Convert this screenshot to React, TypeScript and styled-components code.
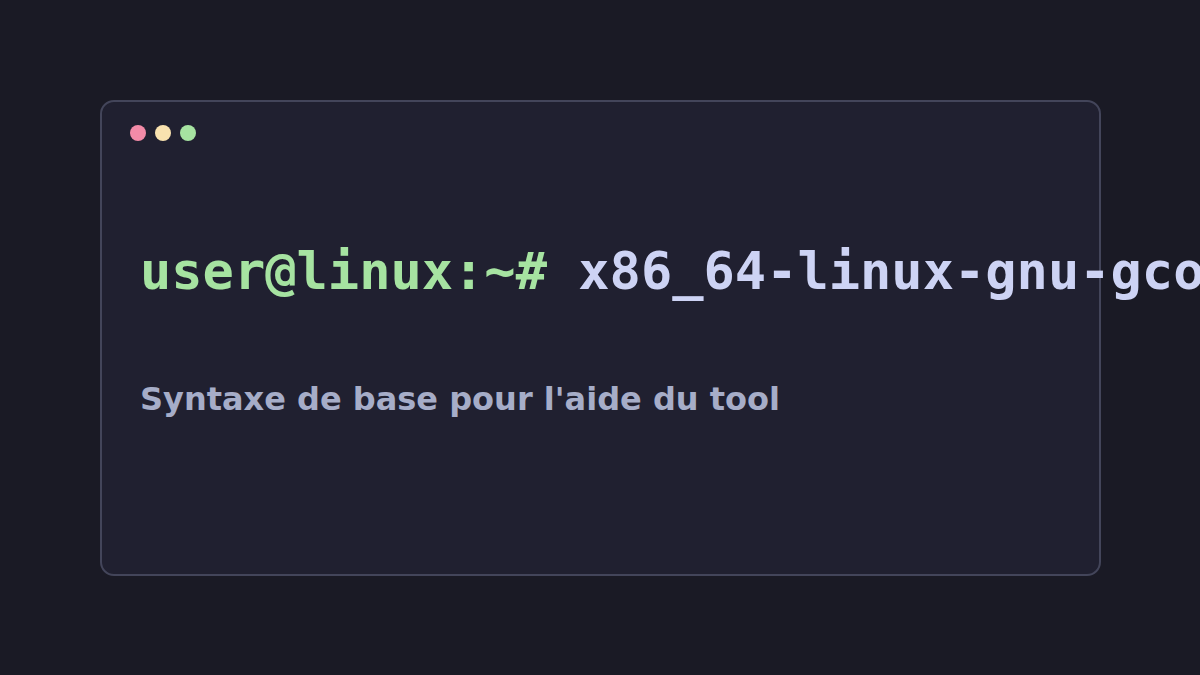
import React from "react";
import styled, { createGlobalStyle } from "styled-components";

const Global = createGlobalStyle`
  html, body { margin: 0; padding: 0; background: #1a1a25; overflow: hidden; }
  #root { width: 1200px; height: 675px; }
`;

const Page = styled.div`
  width: 1200px;
  height: 675px;
  box-sizing: border-box;
  padding: 100px;
  background: #1a1a25;
`;

const Card = styled.div`
  box-sizing: border-box;
  width: 1001px;
  height: 476px;
  border: 2px solid #43455a;
  border-radius: 14px;
  background: #202030;
  padding: 23px 28px;
  display: flex;
  flex-direction: column;
`;

const Dots = styled.div`
  display: flex;
  gap: 9px;
`;

const Dot = styled.span<{ $c: string }>`
  width: 16px;
  height: 16px;
  border-radius: 50%;
  background: ${(p) => p.$c};
`;

const Body = styled.div`
  padding-left: 10px;
  display: flex;
  flex-direction: column;
`;

const Command = styled.div`
  margin-top: 100px;
  font-family: "DejaVu Sans Mono", monospace;
  font-weight: bold;
  font-size: 52px;
  line-height: 60px;
  white-space: nowrap;
  color: #cdd3f4;
`;

const Prompt = styled.span`
  color: #a6e3a1;
`;

const Caption = styled.div`
  margin-top: 79px;
  font-family: "DejaVu Sans", sans-serif;
  font-weight: bold;
  font-size: 32px;
  line-height: 38px;
  color: #a6adc8;
`;

export default function App() {
  return (
    <>
      <Global />
      <Page>
        <Card>
          <Dots>
            <Dot $c="#f38ba8" />
            <Dot $c="#f9e2af" />
            <Dot $c="#a6e3a1" />
          </Dots>
          <Body>
            <Command>
              <Prompt>user@linux:~#</Prompt> x86_64-linux-gnu-gcov
            </Command>
            <Caption>Syntaxe de base pour l'aide du tool</Caption>
          </Body>
        </Card>
      </Page>
    </>
  );
}
